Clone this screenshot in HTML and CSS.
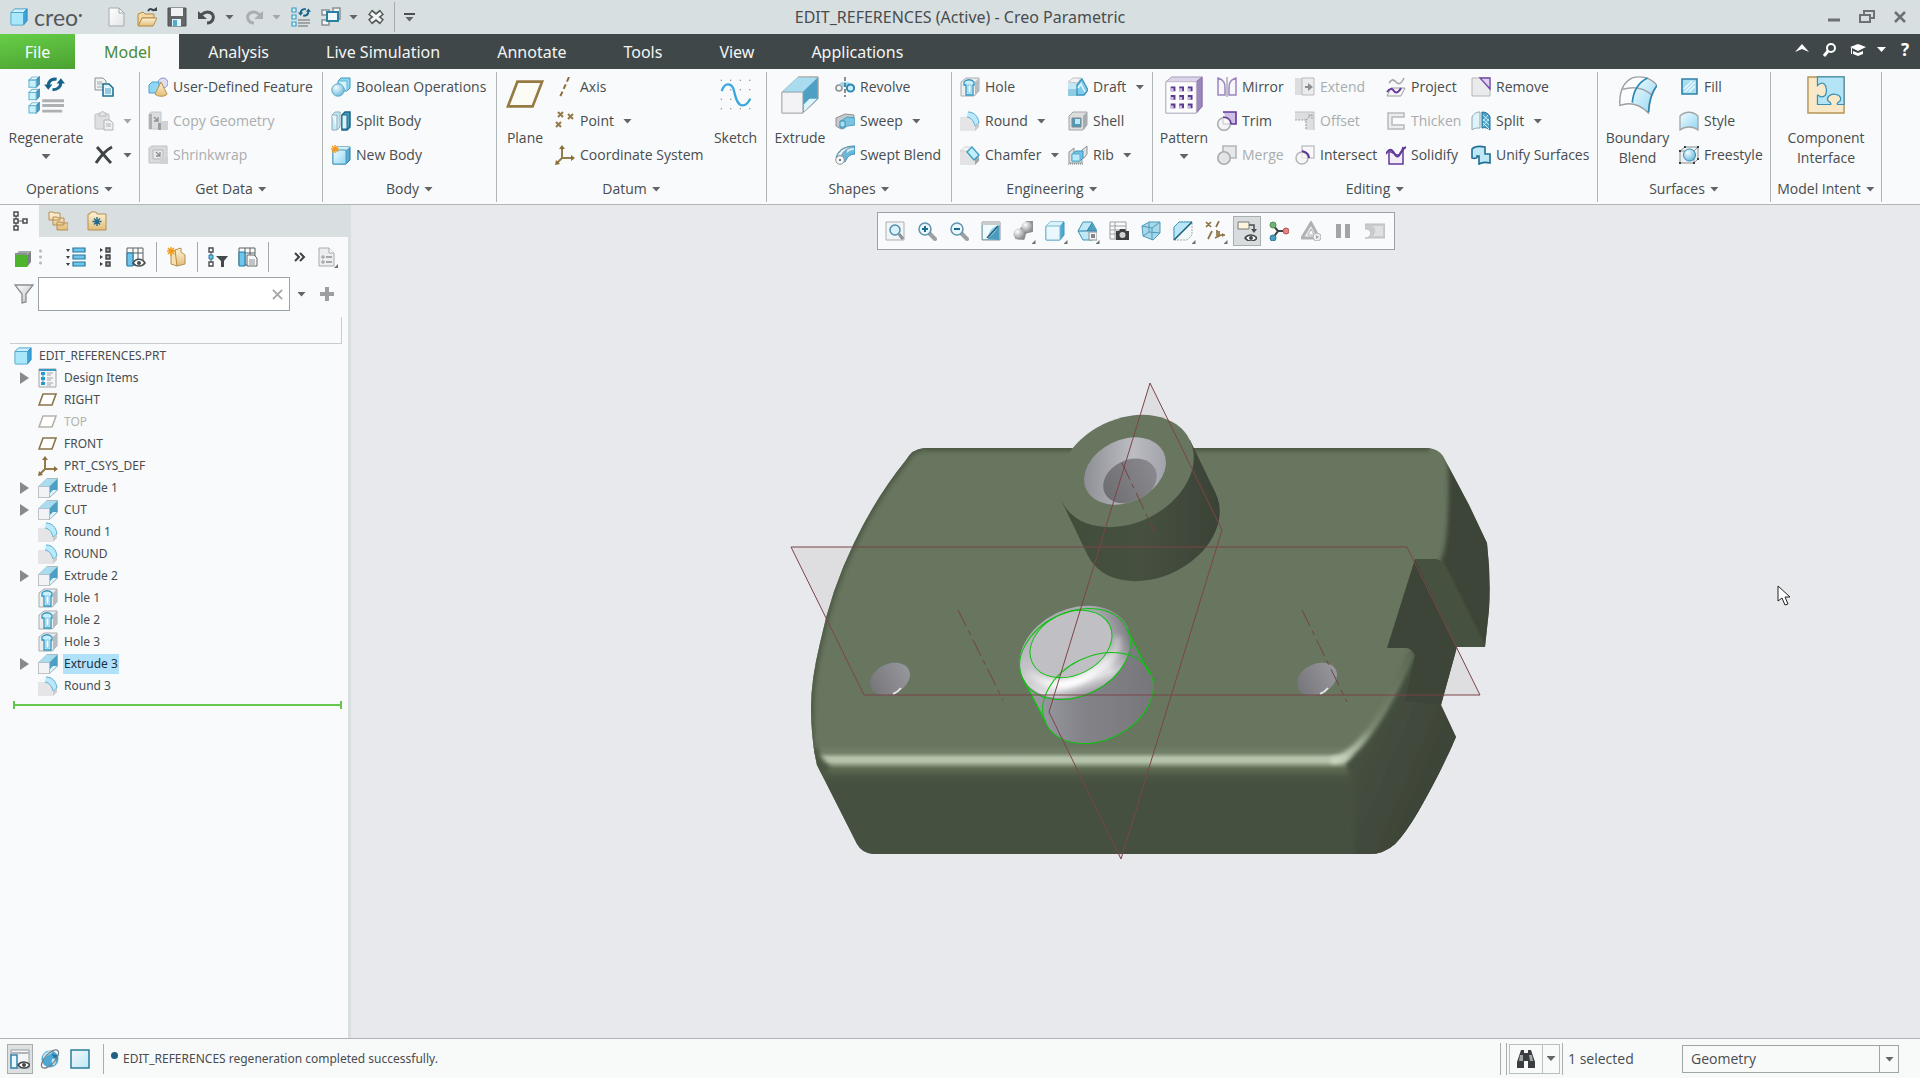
FILE: index.html
```html
<!DOCTYPE html>
<html lang="en">
<head>
<meta charset="utf-8">
<title>EDIT_REFERENCES (Active) - Creo Parametric</title>
<link rel="stylesheet" href="styles.css">
</head>
<body>
<svg class="sprite" aria-hidden="true">
  <defs>
    <linearGradient id="gBlue" x1="0" y1="0" x2="1" y2="1"><stop offset="0" stop-color="#f4fcff"/><stop offset="1" stop-color="#8fd6f3"/></linearGradient>
    <linearGradient id="gGray" x1="0" y1="0" x2="1" y2="1"><stop offset="0" stop-color="#ffffff"/><stop offset="1" stop-color="#b9bcbf"/></linearGradient>
    <linearGradient id="gPage" x1="0" y1="0" x2="1" y2="1"><stop offset="0" stop-color="#ffffff"/><stop offset="1" stop-color="#e2e4e6"/></linearGradient>
    <linearGradient id="gGold" x1="0" y1="0" x2="0" y2="1"><stop offset="0" stop-color="#fdf3d8"/><stop offset="1" stop-color="#e3bd7a"/></linearGradient>
    <radialGradient id="gBall" cx=".35" cy=".3" r=".8"><stop offset="0" stop-color="#f2fbff"/><stop offset="1" stop-color="#63b5d9"/></radialGradient>
    <radialGradient id="gGrayBall" cx=".35" cy=".3" r=".8"><stop offset="0" stop-color="#ffffff"/><stop offset="1" stop-color="#7d8083"/></radialGradient>
  </defs>
  <symbol id="cube" viewBox="0 0 20 20"><path d="M1 5 5 1h14l-4 4z" fill="#cdf1fc" stroke="#3f9cc8"/><path d="M15 5l4-4v13l-4 5z" fill="#3aa5dc" stroke="#2f86b4"/><rect x="1" y="5" width="14" height="14" rx="1" fill="#a9e7fb" stroke="#4aa5cb"/></symbol>
  <symbol id="minicube" viewBox="0 0 12 12"><path d="M1 4 4 1h7L8 4z" fill="#e6f8fd" stroke="#7fbdd6"/><path d="M8 4l3-3v7l-3 3z" fill="#4d9dc0" stroke="#3d87a8"/><path d="M1 4h7v7H1z" fill="#c9f0fb" stroke="#63b3d3"/></symbol>
  <symbol id="cycle" viewBox="0 0 20 16"><path d="M4 9c0-4 3-7 8-6" fill="none" stroke="#17648a" stroke-width="3"/><path d="M0 8h8l-4 5z" fill="#17648a"/><path d="M16 6c0 4-3 7-8 7" fill="none" stroke="#17648a" stroke-width="3"/><path d="M12 7h8l-4-5z" fill="#17648a"/></symbol>
  <symbol id="new" viewBox="0 0 20 20"><path d="M2 1h10l5 5v13H2z" fill="url(#gPage)" stroke="#a6aaad"/><path d="M12 1v5h5z" fill="#fff" stroke="#a3a7aa"/></symbol>
  <symbol id="open" viewBox="0 0 20 20"><path d="M1 7l5-2 2 2h9v4H5L2 18H1z" fill="#f3d9a3" stroke="#b58a45"/><path d="M5 11h15l-4 8H1z" fill="url(#gGold)" stroke="#b58a45"/><path d="M11 4c2-3 5-2 6 0" fill="none" stroke="#3d4548" stroke-width="2"/><path d="M14 4h6V0z" fill="#3d4548"/></symbol>
  <symbol id="save" viewBox="0 0 20 20"><path d="M1 1h18v18H1z" fill="#63676a" stroke="#4a4e50"/><path d="M4 1h12v8H4z" fill="#f0f2f3"/><path d="M5 12h9v7H5z" fill="#dff3fb"/><path d="M6 13h4v6H6z" fill="#54a9cf"/></symbol>
  <symbol id="undo" viewBox="0 0 20 20"><path d="M4 8c6-6 14-2 12 4-1 3-4 4-6 4" fill="none" stroke="currentColor" stroke-width="3"/><path d="M1 4v8h9z" fill="currentColor"/></symbol>
  <symbol id="windows" viewBox="0 0 20 20"><g fill="#f5f7f8" stroke="#8b9092" stroke-width="1.5"><path d="M1 3h7v5H1zM12 1h7v11h-7zM1 13h7v5H1z"/></g><path d="M6 5h11v9H6z" fill="#eefaff" stroke="#2b7fa5" stroke-width="2"/></symbol>
  <symbol id="closewin" viewBox="0 0 16 16"><path d="M2 3l12 10M14 3L2 13" stroke="#54595b" stroke-width="6.500"/><path d="M3 4l10 8M13 4L3 12" stroke="#f5f7f7" stroke-width="3"/></symbol>

  <symbol id="regen" viewBox="0 0 40 40"><use href="#minicube" x="1" y="0" width="13" height="13"/><use href="#minicube" x="1" y="13" width="13" height="13"/><use href="#minicube" x="1" y="27" width="13" height="13"/><use href="#cycle" x="18" y="0" width="22" height="18"/><path d="M16 26h23M16 31h23M16 37h21" stroke="#aeb1b4" stroke-width="3"/></symbol>
  <symbol id="regensm" viewBox="0 0 20 20"><g fill="#d8f3fc" stroke="#3a9cc8" stroke-width="1.200"><path d="M1 1h4v4H1zM1 8h4v4H1zM1 15h4v4H1z"/></g><use href="#cycle" x="7" y="0" width="13" height="11"/><path d="M7 13h12M7 16h12M7 19h10" stroke="#8d9194" stroke-width="1.500"/></symbol>
  <symbol id="copy" viewBox="0 0 20 20"><path d="M1 1h8l3 3v9H1z" fill="#f1f3f4" stroke="#8c9194"/><path d="M3 5h5M3 7h6M3 10h5" stroke="#a2a7aa"/><path d="M9 7h6l4 4v8H9z" fill="#e7f6fc" stroke="#1f7396" stroke-width="1.6"/><path d="M11 12h6M11 14h6M11 16h6" stroke="#4f9cbd"/></symbol>
  <symbol id="paste" viewBox="0 0 20 20"><rect x="1" y="3" width="14" height="15" rx="1" fill="#dedfe1" stroke="#bfc1c4"/><path d="M5 5V2h2c0-2 3-2 3 0h2v3z" fill="#e6e7e9" stroke="#b4b7b9"/><path d="M10 9h6l3 3v7h-9z" fill="#eff0f1" stroke="#b0b3b5"/><path d="M12 13h5M12 15h5" stroke="#b0b3b5"/></symbol>
  <symbol id="delete" viewBox="0 0 20 20"><path d="M3 2c4 4 9 11 14 16" stroke="#3f4446" stroke-width="3" fill="none"/><path d="M18 2C12 5 6 12 2 18" stroke="#3f4446" stroke-width="3" fill="none"/></symbol>
  <symbol id="udf" viewBox="0 0 20 20"><circle cx="15" cy="6" r="5" fill="#dcdff3" stroke="#8d95c2"/><path d="M1 8l3-3h7v8l-2 3H1z" fill="#8fd7f4" stroke="#4aa2c9"/><path d="M13 5l6 12c-1 3-10 3-12 0z" fill="url(#gGold)" stroke="#b98f4a"/></symbol>
  <symbol id="copygeom" viewBox="0 0 20 20"><path d="M1 3l2-2h10v8l-3 9H1z" fill="#dcdddf" stroke="#c4c6c8"/><path d="M1 3h3v15H1z" fill="#aeb0b2"/><path d="M6 6l4 4M10 6v4H6" stroke="#8c8e90" stroke-width="1.3" fill="none"/><path d="M10 12l3-2h7v9H10z" fill="#d0d2d4"/><path d="M10 12h3v7h-3z" fill="#9b9d9f"/></symbol>
  <symbol id="shrink" viewBox="0 0 20 20"><path d="M1 3l3-2h15v14l-4 3H1z" fill="#d8dadc" stroke="#c0c2c4"/><path d="M5 5h10v9H5z" fill="#e9eaeb" stroke="#b3b5b7"/><path d="M8 7l4 4M12 7v4H8" stroke="#8c8e90" stroke-width="1.3" fill="none"/><path d="M12 12h8v7h-8z" fill="#cfd1d3"/></symbol>
  <symbol id="boolean" viewBox="0 0 20 20"><path d="M7 4l3-3h9v10l-3 3H7z" fill="#8ed7f3" stroke="#3b97bf"/><path d="M7 4h9v10" fill="#d3f3fd" stroke="#65b5d5"/><circle cx="7" cy="13" r="6.2" fill="url(#gBall)" stroke="#5aa7c7"/></symbol>
  <symbol id="splitbody" viewBox="0 0 20 20"><path d="M1 4l3-3h5v15l-3 3H1z" fill="#c6e9f6" stroke="#8cabba"/><path d="M1 4h5v15" fill="#edf8fc" stroke="#8cabba"/><path d="M11 4l3-3h5v15l-3 3h-5z" fill="#4b9dc0" stroke="#1c6688" stroke-width="1.5"/><path d="M11 4h5v14h-5z" fill="#d6f4fd" stroke="#1c6688"/></symbol>
  <symbol id="newbody" viewBox="0 0 20 20"><path d="M2 5l4-3h13v13l-4 4H2z" fill="#5aabcf" stroke="#2b7ba0"/><path d="M2 5h13l4-3H6z" fill="#cfeffa"/><path d="M2 5h13v14H2z" fill="url(#gBlue)" stroke="#4a9dc0"/><path d="M4 0v8M0 4h8M1 1l6 6M7 1L1 7" stroke="#f29a1e" stroke-width="1.4"/></symbol>
  <symbol id="plane" viewBox="0 0 40 40"><path d="M12 6h26L28 32H2z" fill="#fdfbf6" stroke="#957a43" stroke-width="2.8"/></symbol>
  <symbol id="axis" viewBox="0 0 20 20"><path d="M14 0L5 20" stroke="#8b6f3c" stroke-width="2" stroke-dasharray="5 3"/></symbol>
  <symbol id="point" viewBox="0 0 20 20"><path d="M3 1l5 5M8 1L3 6M13 3l5 5M18 3l-5 5M1 11l5 5M6 11l-5 5" stroke="#94794a" stroke-width="2"/></symbol>
  <symbol id="csys" viewBox="0 0 20 20"><path d="M7 2v11h11M7 13l-5 5" stroke="#957a4a" stroke-width="2" fill="none"/><path d="M4 4l3-4 3 4zM16 10l4 3-4 3zM0 20l1-5 4 4z" fill="#8b6f3c"/></symbol>
  <symbol id="sketch" viewBox="0 0 34 34"><g fill="#4c4f51"><path d="M1 1h1v1H1zM11 1h1v1h-1zM21 1h1v1h-1zM31 1h1v1h-1zM11 11h1v1h-1zM21 11h1v1h-1zM31 11h1v1h-1zM1 21h1v1H1zM11 21h1v1h-1zM31 21h1v1h-1zM1 31h1v1H1zM11 31h1v1h-1zM21 31h1v1h-1zM31 31h1v1h-1z"/></g><path d="M2 13C5 3 13 4 15 13s4 15 9 15c4 0 6-3 8-7" fill="none" stroke="#3aa8de" stroke-width="2.4"/></symbol>
  <symbol id="extrude" viewBox="0 0 40 40"><path d="M1 17L18 1h21v23L23 39H1z" fill="#7fc1dd" stroke="#b4a9a4"/><path d="M1 17L18 1h21L23 17z" fill="#8bcbe5"/><path d="M39 1v23L23 39V17z" fill="#4d9fc3"/><path d="M18 1L2 16h21L38 2z" fill="#a9dcef"/><path d="M24 38V30l6-6h8z" fill="#dcf4fd"/><path d="M1 17h22v22H1z" fill="#f3f3f5" stroke="#a9abae"/><path d="M18 1h21v23L23 39" fill="none" stroke="#b4a9a4"/></symbol>
  <symbol id="revolve" viewBox="0 0 20 20"><circle cx="4" cy="11" r="3" fill="#f4f5f6" stroke="#8f9294" stroke-width="1.6"/><path d="M4 7c2-3 10-3 12 0v3H8" fill="#9cd8f0"/><circle cx="15.500" cy="11" r="3.600" fill="#c9effb" stroke="#2d88b3" stroke-width="2"/><path d="M10 0v20" stroke="#3f4446" stroke-width="1.2" stroke-dasharray="4 2"/></symbol>
  <symbol id="sweep" viewBox="0 0 20 20"><path d="M1 7l9-4 9 1v2l-9 4v6l-4 2-5-3z" fill="#c7cacc" stroke="#8f9294"/><path d="M6 10l6-4 8 1v7l-8 1-4 3-3-2z" fill="#7cc3df" stroke="#4ca0c4"/><path d="M5 10h5v6H5z" fill="#a9dff2" stroke="#3b8cae"/></symbol>
  <symbol id="swept" viewBox="0 0 20 20"><path d="M1 13C3 5 9 1 20 1v8c-6 0-8 4-10 8z" fill="#6bb7d8" stroke="#3a8fb5"/><path d="M2 11C6 4 10 2 17 2 10 4 8 7 6 11z" fill="#f0f4f6" stroke="#8fa1a9"/><path d="M12 5c3-2 5-2 7-2v2c-3 0-5 1-7 3z" fill="#c6ebf8"/><circle cx="5" cy="15" r="4.300" fill="#f4f5f6" stroke="#8f9294"/><circle cx="5" cy="15" r="1" fill="#4c4f51"/></symbol>
  <symbol id="hole" viewBox="0 0 20 20"><path d="M1 5l5-4h13v13l-5 5H1z" fill="#eceded" stroke="#a9acae"/><path d="M15 5l4-4v13l-4 5z" fill="#b9bcbe"/><path d="M4 8V5c2-3 8-3 10 0v3h-1v10H6V8z" fill="#c8effc" stroke="#3495c0" stroke-width="1.300"/><path d="M8 8h3v8H8z" fill="#fff" stroke="#7cc4e0"/></symbol>
  <symbol id="round" viewBox="0 0 20 20"><path d="M0 6h8c5 1 7 6 7 14H0z" fill="#e5e5e7"/><path d="M0 6l6-5h4L8 6z" fill="#f2f7f9"/><path d="M7 6c5 1 7 5 8 9l4-3C18 5 14 1 8 1" fill="#b9e9fa" stroke="#58aed0"/><path d="M15 15v5l4-4v-4z" fill="#c8cacc"/></symbol>
  <symbol id="chamfer" viewBox="0 0 20 20"><path d="M0 6h7l8 8v6H0z" fill="#e3e3e5"/><path d="M0 6l5-4h7L7 6z" fill="#f5f5f6" stroke="#cfd0d2"/><path d="M15 14l4-3v5l-4 4z" fill="#a4a7a9"/><path d="M7 7l5-5 7 8-5 5z" fill="#c2effd" stroke="#3d9cc4" stroke-width="1.300"/></symbol>
  <symbol id="draft" viewBox="0 0 20 20"><path d="M0 6h10v13H0z" fill="#c3e7f4"/><path d="M0 5l5-4h8l-3 5z" fill="#f1f2f3" stroke="#bfc1c3"/><path d="M0 12h10v7H0z" fill="#8fcbe3"/><path d="M9 8l5-6 6 11-4 5h-7z" fill="#7fcdee" stroke="#3a94ba" stroke-width="1.300"/><path d="M10 11l3-4 4 8" fill="none" stroke="#e8f8fe" stroke-width="1.500"/></symbol>
  <symbol id="shell" viewBox="0 0 20 20"><path d="M1 5l4-4h14v13l-4 5H1z" fill="#dcdddf" stroke="#a3a6a8"/><path d="M15 5l4-4v13l-4 5z" fill="#a9acae"/><path d="M4 7h9v9H4z" fill="#4c9abb" stroke="#7f8b90"/><path d="M7 8h5v5H7z" fill="#bfe7f5"/></symbol>
  <symbol id="rib" viewBox="0 0 20 20"><path d="M1 18V7l5-4v10h10l3-4V1l-5 4v13z" fill="#dfe1e2" stroke="#8f9294"/><path d="M4 9l4-3h7v7l-3 3H4z" fill="#6ec3e6" stroke="#3a94ba"/><path d="M4 9h8v7H4z" fill="#b8eafb" stroke="#58aed0"/><path d="M0 19h16" stroke="#6c7072" stroke-dasharray="1 1"/></symbol>
  <symbol id="pattern" viewBox="0 0 40 40"><path d="M1 6l6-5h32v31l-6 7H1z" fill="#dcd4ea" stroke="#a79cbf"/><path d="M33 6l6-5v31l-6 7z" fill="#9b86bd" stroke="#8671ab"/><path d="M1 6h32v33H1z" fill="#fdfdfe" stroke="#b9b3c4"/><g fill="#5b3a92"><path d="M6 11h5v5H6zM15 11h5v5h-5zM24 11h5v5h-5zM6 20h5v5H6zM15 20h5v5h-5zM24 20h5v5h-5zM6 29h5v5H6zM15 29h5v5h-5zM24 29h5v5h-5z"/></g><g fill="#cbbfe2"><path d="M6 13h3v3H6zM15 13h3v3h-3zM24 13h3v3h-3zM6 22h3v3H6zM15 22h3v3h-3zM24 22h3v3h-3zM6 31h3v3H6zM15 31h3v3h-3zM24 31h3v3h-3z"/></g></symbol>
  <symbol id="mirror" viewBox="0 0 20 20"><path d="M1 1c6 2 7 5 7 10v7H1zM19 1c-6 2-7 5-7 10v7h7z" fill="#f8f6fb" stroke="#9a85c0" stroke-width="1.500"/><path d="M10 0v20" stroke="#85898b"/></symbol>
  <symbol id="trim" viewBox="0 0 20 20"><path d="M6 1h13v12h-6" fill="#cdbfe6" stroke="#62399b" stroke-width="1.600"/><circle cx="7" cy="13" r="6.300" fill="#f2f3f4" fill-opacity=".8" stroke="#a9acae" stroke-width="1.500"/><path d="M6 13V7c4 0 7 2 7 6z" fill="#f8f8fa" stroke="#c3c5c7"/><path d="M6 6c5 0 8 3 8 7" fill="none" stroke="#62399b" stroke-width="1.600"/></symbol>
  <symbol id="merge" viewBox="0 0 20 20"><path d="M6 1h13v12H6z" fill="#e6e7e8" stroke="#b4b6b8" stroke-width="1.600"/><circle cx="7" cy="13" r="6.200" fill="#e3e4e5" stroke="#a9acae" stroke-width="1.600"/></symbol>
  <symbol id="extend" viewBox="0 0 20 20"><path d="M0 1h19v17H0z" fill="#dcdddf"/><path d="M7 1h12v17H7z" fill="#ececee" stroke="#b7b9bb"/><path d="M10 10h4" stroke="#8c8f91" stroke-width="2"/><path d="M13 6l5 4-5 4z" fill="#8c8f91"/></symbol>
  <symbol id="offset" viewBox="0 0 20 20"><path d="M0 1h19v18h-8V9H0z" fill="#dddee0"/><path d="M0 1h19v18" fill="none" stroke="#bfc1c3"/><path d="M0 9h11v10M11 9l5-5M13 4h4v4" fill="none" stroke="#a3a6a8" stroke-width="1.200" stroke-dasharray="2 1"/></symbol>
  <symbol id="intersect" viewBox="0 0 20 20"><path d="M7 1h12v12H7z" fill="#f8f8fa" stroke="#c2c4c6" stroke-width="1.500"/><circle cx="7" cy="13" r="6" fill="#f5f5f7" fill-opacity=".7" stroke="#b2b5b7" stroke-width="1.500"/><path d="M7 6c4 1 7 3 7 7" fill="none" stroke="#5e3996" stroke-width="2"/></symbol>
  <symbol id="project" viewBox="0 0 20 20"><path d="M3 6c3-4 4-4 7-1s5 2 8-4" fill="none" stroke="#a3a6a8" stroke-width="1.600"/><path d="M5 11h14l-4 8H1z" fill="#f4f4f6" stroke="#9c9fa1"/><path d="M1 15c3-4 5-4 7-1s5 1 7-3" fill="none" stroke="#62399b" stroke-width="2"/></symbol>
  <symbol id="thicken" viewBox="0 0 20 20"><path d="M18 2H2v16h16v-4H6V6h12z" fill="#ececed" stroke="#b7b9bb" stroke-width="1.500"/></symbol>
  <symbol id="solidify" viewBox="0 0 20 20"><path d="M3 7c3-2 6 4 9 3 2 0 4-4 5-8v17H3z" fill="#f2eef8" stroke="#62399b" stroke-width="1.500"/><path d="M0 9c3-6 6-5 8-1s4 5 6 1 2-5 6-7" fill="none" stroke="#62399b" stroke-width="2"/></symbol>
  <symbol id="remove" viewBox="0 0 20 20"><path d="M1 1h18v18H1z" fill="#e9eaeb" stroke="#b4b6b8"/><path d="M9 1h10v11z" fill="#ddd0f2" stroke="#6f48a6" stroke-width="1.300"/></symbol>
  <symbol id="splitsurf" viewBox="0 0 20 20"><path d="M1 6c2-4 5-5 8-5v16c-3 0-6 0-8 2z" fill="#dff3fb" stroke="#8fa7b1"/><path d="M11 1c4 0 7 2 8 5v13c-2-2-5-3-8-2z" fill="#4da3c8" stroke="#236f92"/><path d="M12 4l6 6M12 8l6 6M12 12l6 6M17 4l-5 6M18 8l-6 7" stroke="#c4ecfb" stroke-width="1"/></symbol>
  <symbol id="unify" viewBox="0 0 20 20"><path d="M1 4c3-3 8-3 13-2v7h5v9c-4-1-8-1-11 1v-8H6c1 2-2 3-5 2z" fill="#bfe8f7" stroke="#1f6f94" stroke-width="1.600"/></symbol>
  <symbol id="boundary" viewBox="0 0 40 40"><path d="M1 31C0 15 5 6 14 2h16L14 34z" fill="#fbfcfd"/><path d="M14 28c1-13 7-21 16-26l10 8c-6 8-9 18-9 29-5-5-10-8-17-11z" fill="url(#gBlue)"/><path d="M1 31C0 15 6 6 14 2c7-2 18-2 26 8-6 8-9 18-9 29C22 30 12 27 1 31z" fill="none" stroke="#9c9fa1" stroke-width="1.500"/><path d="M4 14c10-3 20-3 31 6" fill="none" stroke="#a3a6a8" stroke-width="1.800"/><path d="M14 28C15 15 20 7 30 2M31 38c1-12 4-22 9-28" fill="none" stroke="#2c88b2" stroke-width="1.800"/></symbol>
  <symbol id="fill" viewBox="0 0 20 20"><path d="M3 2h15v15H3z" fill="#a9def2" stroke="#2e83a8" stroke-width="1.600"/><path d="M5 12l8-8M6 15L16 5M10 15l6-6" stroke="#f0fbff" stroke-width="1.300"/></symbol>
  <symbol id="style" viewBox="0 0 20 20"><path d="M1 5c5-5 13-5 18 0v14c-5-4-13-4-18 0z" fill="url(#gBlue)" stroke="#a2a5a8" stroke-width="1.300"/></symbol>
  <symbol id="freestyle" viewBox="0 0 20 20"><path d="M1 6l5-4h13v12l-4 4H1zM1 6h14v12M15 6l4-4" fill="#eef0f1" stroke="#8c8f91"/><circle cx="10.500" cy="10" r="6" fill="url(#gBall)" stroke="#2f8dba"/><path d="M0 5h2v2H0zM5 1h2v2H5zM18 1h2v2h-2zM0 17h2v2H0zM14 17h2v2h-2zM18 13h2v2h-2z" fill="#3a3d3f"/></symbol>
  <symbol id="component" viewBox="0 0 40 40"><path d="M1 1h38v38H1z" fill="#fae9c8" stroke="#b39455" stroke-width="1.500"/><path d="M11 1h28v29h-7c-1-2 2-3 3-4 2-5-4-7-7-7s-8 3-6 7c1 1 4 2 3 4H11V20c2 0 2 2 4 2 6 0 6-7 5-10-1-5-5-6-9-2z" fill="#b4e4f6" stroke="#3b8fb3" stroke-width="1.300"/></symbol>

  <symbol id="tree" viewBox="0 0 20 20"><path d="M4 3v14M4 10h10" stroke="#55595b" stroke-width="1.200"/><g fill="#f7f9f9" stroke="#4a4e50" stroke-width="1.500"><path d="M2 1h4v4H2zM2 8h4v4H2zM2 15h4v4H2zM11 8h4v4h-4z"/></g></symbol>
  <symbol id="folders" viewBox="0 0 20 20"><g fill="url(#gGold)" stroke="#b58f50"><path d="M1 1h4l1 1h6v7H1zM5 6h4l1 1h6v7H5zM9 11h4l1 1h6v7H9z"/></g></symbol>
  <symbol id="favorites" viewBox="0 0 20 20"><path d="M1 3h2l1-2h5l1 2h9v16H1z" fill="url(#gGold)" stroke="#b58f50"/><path d="M10 6v9M5.500 10.500h9M7 7.500l6 6M13 7.500l-6 6" stroke="#1f6b8e" stroke-width="1.400"/></symbol>
  <symbol id="greenbox" viewBox="0 0 20 20"><path d="M2 8l4-4h12l-4 4z" fill="#a4a7a9"/><path d="M14 8l4-4v11l-4 5z" fill="#7e8183"/><path d="M2 8h12v12H2z" fill="#4cb52e"/><path d="M2 7h12" stroke="#8c8f91" stroke-width="2"/></symbol>
  <symbol id="expand" viewBox="0 0 20 20"><path d="M0 2h4l-2 3zM0 9h4l-2 3zM0 16h4l-2 3z" fill="#3a3e40"/><path d="M7 1h12v4H7zM7 8h12v4H7zM7 15h12v4H7z" fill="#6fc6ec" stroke="#25769b" stroke-width="1.200"/></symbol>
  <symbol id="collapse" viewBox="0 0 20 20"><path d="M4 1l3 2-3 2zM4 8l3 2-3 2zM4 15l3 2-3 2z" fill="#3a3e40"/><path d="M10 1h4v4h-4zM10 8h4v4h-4zM10 15h4v4h-4z" fill="#9a9da0" stroke="#3d4143" stroke-width="1.400"/></symbol>
  <symbol id="columns" viewBox="0 0 20 20"><path d="M1 1h16v17H1zM7 1v17M12 1v14M1 6h16" fill="#fafbfb" stroke="#5c6062"/><path d="M1 6h6v13H1z" fill="#6fc6ec" stroke="#25769b"/><path d="M7 16c3-5 9-5 12 0-3 4-9 4-12 0z" fill="#fff" stroke="#4a4e50" stroke-width="1.600"/><circle cx="13" cy="16" r="2" fill="#4a4e50"/></symbol>
  <symbol id="folderstar" viewBox="0 0 20 20"><path d="M4 4l6-1v16l-6-2z" fill="#f6dfae" stroke="#b58f50"/><path d="M8 3l6-2v4l4 3v9l-8 2z" fill="url(#gGold)" stroke="#b58f50"/><path d="M4 0v9M0 4h9M1 1l6 6M7 1L1 7" stroke="#f29a1e" stroke-width="1.500"/></symbol>
  <symbol id="treefilter" viewBox="0 0 20 20"><path d="M3 3v14" stroke="#4a4e50"/><g fill="#fff" stroke="#4a4e50" stroke-width="1.400"><path d="M1 1h4v4H1zM1 15h4v4H1z"/></g><path d="M1 8h4v4H1z" fill="#6fc6ec" stroke="#25769b"/><path d="M8 9h12l-4 5v6h-3v-6z" fill="#44494b"/></symbol>
  <symbol id="columnsdoc" viewBox="0 0 20 20"><path d="M1 1h16v17H1zM7 1v17M12 1v17M1 6h16" fill="#fafbfb" stroke="#5c6062"/><path d="M1 5h6v14H1z" fill="#6fc6ec" stroke="#25769b"/><path d="M9 8h7l3 3v8H9z" fill="#f6f7f7" stroke="#63676a"/><path d="M11 13h6M11 15h6M11 17h6" stroke="#8b8f91"/></symbol>
  <symbol id="doc" viewBox="0 0 20 20"><path d="M2 1h10l5 5v13H2z" fill="#eceeef" stroke="#a9acae"/><path d="M12 1v5h5" fill="#fff" stroke="#a9acae"/><circle cx="6" cy="10" r="1.200" fill="none" stroke="#8d9092"/><circle cx="6" cy="15" r="1.200" fill="none" stroke="#8d9092"/><path d="M9 10h6M9 15h6" stroke="#8d9092" stroke-width="1.500"/></symbol>
  <symbol id="funnel" viewBox="0 0 20 20"><path d="M1 1h18l-7 9v8l-4 1v-9z" fill="url(#gGray)" stroke="#8a8e90" stroke-width="1.300"/></symbol>
  <symbol id="items" viewBox="0 0 20 20"><path d="M1 1h17v18H1z" fill="#f4f6f7" stroke="#9fa4a7"/><path d="M1 2h17" stroke="#3a9bcb" stroke-width="2"/><path d="M5 6v11" stroke="#2b8dbf"/><path d="M3 4h4v3H3zM3 9h4v3H3zM3 14h4v3H3z" fill="#2b9ad4"/><path d="M9 5h6M9 7h4M9 10h6M9 12h4M9 15h6M9 17h4" stroke="#a3a7aa"/></symbol>
  <symbol id="planesm" viewBox="0 0 20 20"><path d="M5 4h13l-4 11H1z" fill="#fff" stroke="currentColor" stroke-width="1.600"/></symbol>

  <symbol id="lens" viewBox="0 0 20 20"><path d="M12 12l6 6" stroke="#9da1a4" stroke-width="4" stroke-linecap="round"/><circle cx="8" cy="8" r="6" fill="#eaf7fd" stroke="#5f95b0" stroke-width="1.500"/></symbol>
  <symbol id="refit" viewBox="0 0 20 20"><path d="M1 1h18v18H1z" fill="#f2f4f5" stroke="#aeb2b5"/><circle cx="10" cy="9" r="5" fill="#d9f1fb" stroke="#4e8fae" stroke-width="1.500"/><path d="M14 13l4 5" stroke="#8b8f92" stroke-width="3"/></symbol>
  <symbol id="zoomin" viewBox="0 0 20 20"><use href="#lens"/><path d="M5 8h6M8 5v6" stroke="#1b6c94" stroke-width="2"/></symbol>
  <symbol id="zoomout" viewBox="0 0 20 20"><use href="#lens"/><path d="M5 8h6" stroke="#1b6c94" stroke-width="2"/></symbol>
  <symbol id="repaint" viewBox="0 0 20 20"><path d="M1 1h18v18H1z" fill="#8ed0ea" stroke="#8f9497"/><path d="M1 1h18v3H1z" fill="#c8cbcd"/><path d="M18 5c-5 8-8 10-12 13l12 1z" fill="#4c9cc0"/><path d="M18 4C10 6 7 12 7 18L2 18V4z" fill="#f3fafd"/><path d="M17 5L6 17" stroke="#2c5f77" stroke-width="1.600"/></symbol>
  <symbol id="spheres" viewBox="0 0 20 20"><path d="M8 6c3 1 3-3 5-6h7v11l-5 1c-4 1-1 3-4 7l-9-1z" fill="#8d9092"/><circle cx="14" cy="6" r="5.500" fill="url(#gGrayBall)"/><circle cx="6" cy="13" r="5.500" fill="url(#gGrayBall)"/></symbol>
  <symbol id="display" viewBox="0 0 20 20"><path d="M1 5l4-4h14v13l-4 5H1z" fill="#4fabd2" stroke="#3b93b9"/><path d="M1 5l4-4h13l-3 4z" fill="#d9f3fb"/><path d="M1 5h14v14H1z" fill="#eaf8fd" stroke="#7bb9d2"/></symbol>
  <symbol id="saved" viewBox="0 0 20 20"><path d="M1 10L6 1h9l5 9-5 9H6z" fill="#bfe7f6" stroke="#3d93b7"/><path d="M10 10l5-8 5 8z" fill="#4f9fc1"/><path d="M1 10h9l5-8M10 10h9" fill="none" stroke="#2e7fa3"/><path d="M12 11h8v8h-8z" fill="#f5f6f6" stroke="#8a8e90"/><path d="M14 13h4v4h-4z" fill="#83878a"/></symbol>
  <symbol id="viewmgr" viewBox="0 0 20 20"><path d="M1 1h16v17H1zM1 5h16M1 9h16M1 13h8M6 1v17" fill="#fafafa" stroke="#9da1a3"/><path d="M7 10h3l1-2h5l1 2h3v9H7z" fill="#3d4042"/><circle cx="13.500" cy="14" r="3" fill="#cfd2d4"/></symbol>
  <symbol id="persp" viewBox="0 0 20 20"><path d="M1 5l7-4h11v11l-7 7-10-4z" fill="#a9d8ea" stroke="#4c9abb"/><path d="M1 5l10 2 8-6M11 7v12M8 1v10l-6 4M8 11l11 1" fill="none" stroke="#4c9abb"/></symbol>
  <symbol id="section" viewBox="0 0 20 20"><path d="M1 6l5-5h13v13l-5 5H1z" fill="#f3f8fa" stroke="#a5a9ab" stroke-dasharray="2 1"/><path d="M1 19V6l5-5h13z" fill="#b9e5f5" stroke="#3f9ac2"/><path d="M1 19L19 1" stroke="#195f80" stroke-width="1.600"/></symbol>
  <symbol id="datums" viewBox="0 0 20 20"><path d="M1 1l5 5M6 1L1 6M14 0l-3 6M7 10L3 18M12 9v6M10 17l6-3h4M14 10v6" stroke="#8d7243" stroke-width="1.700" fill="none"/><path d="M17 12l3 2-3 2z" fill="#8d7243"/></symbol>
  <symbol id="annot" viewBox="0 0 20 20"><path d="M1 1h11v7H1z" fill="#fdf6db" stroke="#77797b"/><path d="M12 4h5v6" fill="none" stroke="#4a4e50" stroke-width="1.500"/><path d="M14 8h6l-3 4z" fill="#4a4e50"/><path d="M8 17c3-4 9-4 12 0-3 4-9 4-12 0z" fill="#fff" stroke="#44484a" stroke-width="1.600"/><circle cx="14" cy="17" r="2" fill="#44484a"/></symbol>
  <symbol id="spin" viewBox="0 0 20 20"><path d="M4 4l5 6-5 7M9 10h8" fill="none" stroke="#3c4042" stroke-width="2"/><circle cx="4" cy="4" r="3" fill="#74b476" stroke="#4d8a50"/><circle cx="17" cy="10" r="3" fill="#e08383" stroke="#b65252"/><circle cx="4" cy="17" r="3" fill="#4e9dc2" stroke="#2d7698"/></symbol>
  <symbol id="simulate" viewBox="0 0 20 20"><path d="M10 2l8 15H1z" fill="#ececed" stroke="#b0b2b4" stroke-width="3"/><path d="M10 8l3 6H7z" fill="#fff" stroke="#b0b2b4"/><circle cx="16" cy="16" r="4" fill="#eee" stroke="#b5b7b9"/><path d="M15 14l3 2-3 2z" fill="#a4a6a8"/></symbol>
  <symbol id="pause" viewBox="0 0 20 20"><path d="M3 3h5v14H3zM12 3h5v14h-5z" fill="#a2a4a6"/></symbol>
  <symbol id="result" viewBox="0 0 20 20"><path d="M0 3h20v14H0c7 0 8-9 0-9z" fill="#c9cbcd" stroke="#bdbfc1"/><path d="M8 5h10v10H8c3-3 3-7 0-10z" fill="#dfe0e1"/></symbol>

  <symbol id="panel" viewBox="0 0 20 20"><path d="M1 1h18v18H1z" fill="#f2f4f5" stroke="#9a9ea1"/><path d="M1 4h18" stroke="#b2b5b8" stroke-width="2"/><path d="M1 6h6v13H1z" fill="#e6f7fd" stroke="#3287ad" stroke-width="1.500"/><path d="M8 16c3-4 9-4 12 0-3 4-9 4-12 0z" fill="#fff" stroke="#44484a" stroke-width="1.500"/><circle cx="14" cy="16" r="2" fill="#44484a"/></symbol>
  <symbol id="globe" viewBox="0 0 20 20"><circle cx="10" cy="10" r="8.500" fill="#4ba8d4"/><path d="M3 7c2-4 7-6 9-5s-3 4-5 5-3 5-4 4zM12 10c4-1 5 2 3 5s-4 0-3-5z" fill="#c6e9f7"/><path d="M12 5l5 1 1 4-5-2z" fill="#2178a4"/><ellipse cx="10" cy="10" rx="11.500" ry="5" fill="none" stroke="#7a7f82" stroke-width="1.300" transform="rotate(-48 10 10)"/></symbol>
  <symbol id="screen" viewBox="0 0 20 20"><path d="M1 1h18v18H1z" fill="url(#gBlue)"/><path d="M1 1h18v18H1z" fill="#f1f5f7" fill-opacity=".5" stroke="#2b7d9f" stroke-width="1.500"/></symbol>
  <symbol id="binoc" viewBox="0 0 20 20"><path d="M5 1h3v3h4V1h3l4 12v6h-7v-7H8v7H1v-6z" fill="#3b3e40"/><path d="M4 6h3v6H3zM13 6h3l1 6h-3z" fill="#a2a5a7"/></symbol>
</svg>

<header class="titlebar">
  <div class="brand"><svg class="i18"><use href="#cube"/></svg><span>creo<sup>•</sup></span></div>
  <div class="quick">
    <button aria-label="New"><svg class="i20"><use href="#new"/></svg></button>
    <button aria-label="Open"><svg class="i20"><use href="#open"/></svg></button>
    <button aria-label="Save"><svg class="i20"><use href="#save"/></svg></button>
    <button aria-label="Undo"><svg class="i20"><use href="#undo"/></svg><i class="caret"></i></button>
    <button aria-label="Redo" disabled><svg class="i20 flip"><use href="#undo"/></svg><i class="caret"></i></button>
    <button aria-label="Regenerate"><svg class="i20"><use href="#regensm"/></svg></button>
    <button aria-label="Windows"><svg class="i20"><use href="#windows"/></svg><i class="caret"></i></button>
    <button aria-label="Close"><svg class="i16"><use href="#closewin"/></svg></button>
    <button class="customize" aria-label="Customize"><i class="bar"></i><i class="caret"></i></button>
  </div>
  <h1>EDIT_REFERENCES (Active) - Creo Parametric</h1>
  <div class="winctl">
    <button aria-label="Minimize"><svg class="i16" viewBox="0 0 16 16"><path d="M2 11h12" stroke="#6d7173" stroke-width="3"/></svg></button>
    <button aria-label="Restore"><svg class="i16" viewBox="0 0 16 16"><path d="M5 6V2h10v7h-4M1 6h10v7H1z" fill="none" stroke="#6d7173" stroke-width="2"/></svg></button>
    <button aria-label="Close window"><svg class="i16" viewBox="0 0 16 16"><path d="M3 3l10 10M13 3L3 13" stroke="#6d7173" stroke-width="2.500"/></svg></button>
  </div>
</header>

<nav class="tabs">
  <button class="file">File</button>
  <button class="on">Model</button>
  <button>Analysis</button>
  <button>Live Simulation</button>
  <button>Annotate</button>
  <button>Tools</button>
  <button>View</button>
  <button>Applications</button>
  <div class="help">
    <button aria-label="Collapse ribbon"><svg class="i16" viewBox="0 0 16 16"><path d="M1 10l7-8 7 8-7-3z" fill="#fff"/></svg></button>
    <button aria-label="Search"><svg class="i16" viewBox="0 0 16 16"><circle cx="9" cy="6" r="4" fill="none" stroke="#fff" stroke-width="2"/><path d="M6 9l-4 5" stroke="#fff" stroke-width="3"/></svg></button>
    <button aria-label="Learning"><svg class="i16" viewBox="0 0 16 16"><path d="M0 5l8-3 8 3-8 4zM3 9l5 2 5-2v3l-5 2-5-2zM1 6h1v6H1z" fill="#fff"/></svg><i class="caret"></i></button>
    <button aria-label="Help"><b>?</b></button>
  </div>
</nav>

<section class="ribbon">
  <div class="group ops">
    <div class="cols">
      <button class="big"><svg class="i40"><use href="#regen"/></svg><span>Regenerate</span><i class="caret"></i></button>
      <div class="col">
        <button aria-label="Copy"><svg class="i20"><use href="#copy"/></svg></button>
        <button aria-label="Paste" disabled><svg class="i20"><use href="#paste"/></svg><i class="caret"></i></button>
        <button aria-label="Delete"><svg class="i20"><use href="#delete"/></svg><i class="caret"></i></button>
      </div>
    </div>
    <button class="name">Operations<i class="caret"></i></button>
  </div>
  <div class="group getdata">
    <div class="cols"><div class="col">
      <button><svg class="i20"><use href="#udf"/></svg>User-Defined Feature</button>
      <button disabled><svg class="i20"><use href="#copygeom"/></svg>Copy Geometry</button>
      <button disabled><svg class="i20"><use href="#shrink"/></svg>Shrinkwrap</button>
    </div></div>
    <button class="name">Get Data<i class="caret"></i></button>
  </div>
  <div class="group body">
    <div class="cols"><div class="col">
      <button><svg class="i20"><use href="#boolean"/></svg>Boolean Operations</button>
      <button><svg class="i20"><use href="#splitbody"/></svg>Split Body</button>
      <button><svg class="i20"><use href="#newbody"/></svg>New Body</button>
    </div></div>
    <button class="name">Body<i class="caret"></i></button>
  </div>
  <div class="group datum">
    <div class="cols">
      <button class="big"><svg class="i40"><use href="#plane"/></svg><span>Plane</span></button>
      <div class="col">
        <button><svg class="i20"><use href="#axis"/></svg>Axis</button>
        <button><svg class="i20"><use href="#point"/></svg>Point<i class="caret"></i></button>
        <button><svg class="i20"><use href="#csys"/></svg>Coordinate System</button>
      </div>
      <button class="big"><svg class="i40" viewBox="-3 -3 40 40"><use href="#sketch" width="34" height="34"/></svg><span>Sketch</span></button>
    </div>
    <button class="name">Datum<i class="caret"></i></button>
  </div>
  <div class="group shapes">
    <div class="cols">
      <button class="big"><svg class="i40"><use href="#extrude"/></svg><span>Extrude</span></button>
      <div class="col">
        <button><svg class="i20"><use href="#revolve"/></svg>Revolve</button>
        <button><svg class="i20"><use href="#sweep"/></svg>Sweep<i class="caret"></i></button>
        <button><svg class="i20"><use href="#swept"/></svg>Swept Blend</button>
      </div>
    </div>
    <button class="name">Shapes<i class="caret"></i></button>
  </div>
  <div class="group eng">
    <div class="cols">
      <div class="col">
        <button><svg class="i20"><use href="#hole"/></svg>Hole</button>
        <button><svg class="i20"><use href="#round"/></svg>Round<i class="caret"></i></button>
        <button><svg class="i20"><use href="#chamfer"/></svg>Chamfer<i class="caret"></i></button>
      </div>
      <div class="col">
        <button><svg class="i20"><use href="#draft"/></svg>Draft<i class="caret"></i></button>
        <button><svg class="i20"><use href="#shell"/></svg>Shell</button>
        <button><svg class="i20"><use href="#rib"/></svg>Rib<i class="caret"></i></button>
      </div>
    </div>
    <button class="name">Engineering<i class="caret"></i></button>
  </div>
  <div class="group editing">
    <div class="cols">
      <button class="big"><svg class="i40"><use href="#pattern"/></svg><span>Pattern</span><i class="caret"></i></button>
      <div class="col">
        <button><svg class="i20"><use href="#mirror"/></svg>Mirror</button>
        <button><svg class="i20"><use href="#trim"/></svg>Trim</button>
        <button disabled><svg class="i20"><use href="#merge"/></svg>Merge</button>
      </div>
      <div class="col">
        <button disabled><svg class="i20"><use href="#extend"/></svg>Extend</button>
        <button disabled><svg class="i20"><use href="#offset"/></svg>Offset</button>
        <button><svg class="i20"><use href="#intersect"/></svg>Intersect</button>
      </div>
      <div class="col">
        <button><svg class="i20"><use href="#project"/></svg>Project</button>
        <button disabled><svg class="i20"><use href="#thicken"/></svg>Thicken</button>
        <button><svg class="i20"><use href="#solidify"/></svg>Solidify</button>
      </div>
      <div class="col">
        <button><svg class="i20"><use href="#remove"/></svg>Remove</button>
        <button><svg class="i20"><use href="#splitsurf"/></svg>Split<i class="caret"></i></button>
        <button><svg class="i20"><use href="#unify"/></svg>Unify Surfaces</button>
      </div>
    </div>
    <button class="name">Editing<i class="caret"></i></button>
  </div>
  <div class="group surfaces">
    <div class="cols">
      <button class="big"><svg class="i40"><use href="#boundary"/></svg><span>Boundary<br>Blend</span></button>
      <div class="col">
        <button><svg class="i20"><use href="#fill"/></svg>Fill</button>
        <button><svg class="i20"><use href="#style"/></svg>Style</button>
        <button><svg class="i20"><use href="#freestyle"/></svg>Freestyle</button>
      </div>
    </div>
    <button class="name">Surfaces<i class="caret"></i></button>
  </div>
  <div class="group intent">
    <div class="cols"><button class="big"><svg class="i40"><use href="#component"/></svg><span>Component<br>Interface</span></button></div>
    <button class="name">Model Intent<i class="caret"></i></button>
  </div>
</section>

<main>
  <aside>
    <div class="paneltabs">
      <button class="on" aria-label="Model tree"><svg class="i20"><use href="#tree"/></svg></button>
      <button aria-label="Folders"><svg class="i20"><use href="#folders"/></svg></button>
      <button aria-label="Favorites"><svg class="i20"><use href="#favorites"/></svg></button>
    </div>
    <div class="treetools">
      <button aria-label="Model"><svg class="i20"><use href="#greenbox"/></svg></button>
      <i class="grip"></i>
      <button aria-label="Expand all"><svg class="i20"><use href="#expand"/></svg></button>
      <button aria-label="Collapse all"><svg class="i20"><use href="#collapse"/></svg></button>
      <button aria-label="Columns"><svg class="i20"><use href="#columns"/></svg></button>
      <i class="sep"></i>
      <button aria-label="New folder"><svg class="i20"><use href="#folderstar"/></svg></button>
      <i class="sep"></i>
      <button aria-label="Tree filters"><svg class="i20"><use href="#treefilter"/></svg></button>
      <button aria-label="Tree columns"><svg class="i20"><use href="#columnsdoc"/></svg></button>
      <i class="sep"></i>
      <button class="more" aria-label="More"><svg viewBox="0 0 12 10"><path d="M1 1l4 4-4 4M6 1l4 4-4 4" fill="none" stroke="#3d4143" stroke-width="2"/></svg></button>
      <button class="corner" aria-label="Settings"><svg class="i20"><use href="#doc"/></svg></button>
    </div>
    <div class="filter">
      <svg class="i20"><use href="#funnel"/></svg>
      <div class="searchbox"><input type="text" aria-label="Filter tree"><button aria-label="Clear"><svg viewBox="0 0 12 12"><path d="M1 1l10 10M11 1L1 11" stroke="#a3a7a9" stroke-width="2"/></svg></button></div>
      <i class="caret"></i>
      <button aria-label="Add filter"><svg class="plus" viewBox="0 0 14 14"><path d="M7 0v14M0 7h14" stroke="#9b9fa1" stroke-width="4"/></svg></button>
    </div>
    <div class="treehead"></div>
    <ul class="tree">
      <li class="root"><svg class="i18"><use href="#cube"/></svg><span>EDIT_REFERENCES.PRT</span></li>
      <li><button class="exp" aria-label="Expand"></button><svg class="i20"><use href="#items"/></svg><span>Design Items</span></li>
      <li class="pl"><svg class="i20"><use href="#planesm"/></svg><span>RIGHT</span></li>
      <li class="pl hid"><svg class="i20"><use href="#planesm"/></svg><span>TOP</span></li>
      <li class="pl"><svg class="i20"><use href="#planesm"/></svg><span>FRONT</span></li>
      <li><svg class="i20"><use href="#csys"/></svg><span>PRT_CSYS_DEF</span></li>
      <li><button class="exp" aria-label="Expand"></button><svg class="i20"><use href="#extrude"/></svg><span>Extrude 1</span></li>
      <li><button class="exp" aria-label="Expand"></button><svg class="i20"><use href="#extrude"/></svg><span>CUT</span></li>
      <li><svg class="i20"><use href="#round"/></svg><span>Round 1</span></li>
      <li><svg class="i20"><use href="#round"/></svg><span>ROUND</span></li>
      <li><button class="exp" aria-label="Expand"></button><svg class="i20"><use href="#extrude"/></svg><span>Extrude 2</span></li>
      <li><svg class="i20"><use href="#hole"/></svg><span>Hole 1</span></li>
      <li><svg class="i20"><use href="#hole"/></svg><span>Hole 2</span></li>
      <li><svg class="i20"><use href="#hole"/></svg><span>Hole 3</span></li>
      <li class="sel"><button class="exp" aria-label="Expand"></button><svg class="i20"><use href="#extrude"/></svg><span>Extrude 3</span></li>
      <li><svg class="i20"><use href="#round"/></svg><span>Round 3</span></li>
    </ul>
    <div class="insert"></div>
  </aside>

  <section class="viewport">
    <svg class="scene" viewBox="351 205 1569 833" role="img" aria-label="Part model">
      <defs>
        <linearGradient id="front" x1="0" y1="745" x2="0" y2="785" gradientUnits="userSpaceOnUse"><stop offset="0" stop-color="#68755f"/><stop offset=".2" stop-color="#73816a"/><stop offset=".32" stop-color="#b5c3ab"/><stop offset=".42" stop-color="#b3c2a8"/><stop offset=".58" stop-color="#5f6c54"/><stop offset=".8" stop-color="#495542"/><stop offset="1" stop-color="#455040"/></linearGradient>
        <linearGradient id="side" x1="1345" y1="770" x2="1415" y2="800" gradientUnits="userSpaceOnUse"><stop offset="0" stop-color="#455040"/><stop offset="1" stop-color="#3e4538"/></linearGradient>
        <linearGradient id="bossSide" x1="1065" y1="0" x2="1218" y2="0" gradientUnits="userSpaceOnUse"><stop offset="0" stop-color="#414d3a"/><stop offset=".5" stop-color="#465040"/><stop offset="1" stop-color="#3b4337"/></linearGradient>
        <linearGradient id="bore" x1="1085" y1="0" x2="1165" y2="0" gradientUnits="userSpaceOnUse"><stop offset="0" stop-color="#8f8f96"/><stop offset=".6" stop-color="#bcbcc3"/><stop offset="1" stop-color="#a2a3ab"/></linearGradient>
        <linearGradient id="deep" x1="1103" y1="0" x2="1157" y2="0" gradientUnits="userSpaceOnUse"><stop offset="0" stop-color="#6f6f73"/><stop offset="1" stop-color="#88888e"/></linearGradient>
        <linearGradient id="pinSide" x1="1035" y1="0" x2="1152" y2="0" gradientUnits="userSpaceOnUse"><stop offset="0" stop-color="#9a9aa2"/><stop offset=".4" stop-color="#838389"/><stop offset="1" stop-color="#77777b"/></linearGradient>
        <linearGradient id="pinRound" x1="1045" y1="610" x2="1075" y2="699" gradientUnits="userSpaceOnUse"><stop offset="0" stop-color="#a6a6ad"/><stop offset=".55" stop-color="#c4c4c9"/><stop offset=".85" stop-color="#dedee1"/><stop offset="1" stop-color="#98989d"/></linearGradient>
        <linearGradient id="pinShade" x1="1104" y1="655" x2="1132" y2="645" gradientUnits="userSpaceOnUse"><stop offset="0" stop-color="#8a8a90" stop-opacity="0"/><stop offset="1" stop-color="#808086"/></linearGradient>
        <linearGradient id="glint" x1="1030" y1="0" x2="1120" y2="0" gradientUnits="userSpaceOnUse"><stop offset="0" stop-color="#fff" stop-opacity=".2"/><stop offset=".35" stop-color="#fff"/><stop offset=".6" stop-color="#fff" stop-opacity=".9"/><stop offset="1" stop-color="#fff" stop-opacity=".25"/></linearGradient>
        <linearGradient id="holeL" x1="0" x2="1"><stop offset="0" stop-color="#77777b"/><stop offset="1" stop-color="#96969d"/></linearGradient>
        <linearGradient id="edge" x1="0" y1="650" x2="0" y2="762" gradientUnits="userSpaceOnUse"><stop offset="0" stop-color="#5d6a53"/><stop offset=".7" stop-color="#7b8a70"/><stop offset="1" stop-color="#cfdcc5"/></linearGradient>
        <filter id="soft" filterUnits="userSpaceOnUse" x="780" y="400" width="750" height="500"><feGaussianBlur stdDeviation="2"/></filter>
        <clipPath id="bodyClip"><path d="M924 448H1429Q1438 449 1443 456L1469 505 1487 543Q1491 577 1489 610L1485 647H1457L1441 705 1456 737Q1442 770 1418 812 1405 834 1395 844 1384 854 1369 854H873Q862 853 857 844L817 765Q811 740 811 707 811 680 820 643 831 590 854 543 876 497 906 460 912 449 924 448Z"/></clipPath>
        <clipPath id="bossClip"><path d="M1062 502L1190 440 1216 494 1088 556z"/><ellipse cx="1152" cy="525" rx="71" ry="52" transform="rotate(-26 1152 525)"/></clipPath>
        <clipPath id="boreClip"><ellipse cx="1125" cy="471" rx="43" ry="31" transform="rotate(-26 1125 471)"/></clipPath>
        <clipPath id="pinClip"><path d="M1023 679L1127 629 1149 673 1046 723z"/><ellipse cx="1098" cy="698" rx="58" ry="42" transform="rotate(-26 1098 698)"/></clipPath>
        <clipPath id="capClip"><ellipse cx="1075" cy="652" rx="58" ry="43" transform="rotate(-26 1075 652)"/></clipPath>
      </defs>
      <path d="M791 547H1407L1480 695H864zM1150 383L1222 530 1121 859 1049 712z" fill="#a8a09a" fill-opacity=".15"/>
      <g clip-path="url(#bodyClip)">
        <path d="M800 440h700v420H800z" fill="#68755f"/>
        <path d="M924 448H1429" stroke="#4a5741" stroke-width="6" filter="url(#soft)"/>
        <path d="M924 448Q912 449 906 460 876 497 854 543 831 590 820 643 811 680 811 707V740L817 765" fill="none" stroke="#4d5a44" stroke-width="6" filter="url(#soft)"/>
        <path d="M800 745H1500V870H800z" fill="url(#front)"/>
        <path d="M806 748l11-2q4 14 13 20l-4 10-18-4z" fill="#4b5743" filter="url(#soft)"/>
        <path d="M1412 650h60v230H1352Q1362 800 1345 764 1362 746 1382 712 1400 680 1412 650z" fill="url(#side)" filter="url(#soft)"/>
        <path d="M1411 655Q1384 718 1357 746 1345 758 1334 760" fill="none" stroke="url(#edge)" stroke-width="7" stroke-linecap="round" filter="url(#soft)"/>
        <path d="M1444 440q6 20 4 70-1 40-8 51l4 8 41 82h14V440z" fill="#3d4538" filter="url(#soft)"/>
        <path d="M1415 559h21q6 1 10 8l39 80h-28z" fill="#475140"/>
        <path d="M1415 559l42 88-16 58-36-4 10-46q-4-7-9-7h-19z" fill="#3d4538"/>
      </g>
      <path d="M1050 410h180v180h-180z" fill="url(#bossSide)" clip-path="url(#bossClip)"/>
      <ellipse cx="1126" cy="471" rx="71" ry="52" transform="rotate(-26 1126 471)" fill="#68755f"/>
      <g clip-path="url(#boreClip)"><path d="M1075 430h100v80h-100z" fill="url(#bore)"/><ellipse cx="1130" cy="481" rx="28" ry="21" transform="rotate(-26 1130 481)" fill="url(#deep)"/></g>
      <ellipse cx="890" cy="679" rx="21" ry="15" transform="rotate(-26 890 679)" fill="url(#holeL)"/>
      <ellipse cx="1317" cy="679" rx="21" ry="15" transform="rotate(-26 1317 679)" fill="url(#holeL)"/>
      <path d="M893 694q5-2 8-6M1320 694q5-2 8-6" stroke="#e6e6e6" stroke-width="2" fill="none"/>
      <path d="M1010 600h160v150h-160z" fill="url(#pinSide)" clip-path="url(#pinClip)"/>
      <g clip-path="url(#capClip)">
        <path d="M1010 590h130v120h-130z" fill="url(#pinRound)"/>
        <path d="M1010 590h130v120h-130z" fill="url(#pinShade)"/>
        <path d="M1030 674Q1056 694 1088 676T1118 640" fill="none" stroke="url(#glint)" stroke-width="8" stroke-linecap="round" filter="url(#soft)"/>
      </g>
      <ellipse cx="1071" cy="644" rx="43" ry="31" transform="rotate(-26 1071 644)" fill="#bfbfc4"/>
      <g fill="none" stroke="#10c010" stroke-width="1">
        <ellipse cx="1071" cy="644" rx="43" ry="31" transform="rotate(-26 1071 644)"/>
        <ellipse cx="1075" cy="654" rx="58" ry="42" transform="rotate(-26 1075 654)"/>
        <ellipse cx="1098" cy="698" rx="58" ry="42" transform="rotate(-26 1098 698)"/>
        <path d="M1023 679L1046 723M1127 629L1149 673" stroke-width="1.500"/>
      </g>
      <g fill="none" stroke="#7b4549" stroke-width="1">
        <path d="M791 547H1407L1480 695H864z"/>
        <path d="M1150 383L1222 530 1121 859 1049 712z"/>
      </g>
      <g stroke="#75443e" stroke-width="1" stroke-dasharray="18 5 5 5"><path d="M958 610l45 90M1302 610l45 92M1122 463l33 70"/></g>
      <path d="M1778 586v15l4-3 3 7 3-1-3-7h5z" fill="#fff" stroke="#222" stroke-width="1"/>
    </svg>
    <div class="viewtools">
      <button aria-label="Refit"><svg class="i20"><use href="#refit"/></svg></button>
      <button aria-label="Zoom in"><svg class="i20"><use href="#zoomin"/></svg></button>
      <button aria-label="Zoom out"><svg class="i20"><use href="#zoomout"/></svg></button>
      <button aria-label="Repaint"><svg class="i20"><use href="#repaint"/></svg></button>
      <button class="corner" aria-label="Rendering"><svg class="i20"><use href="#spheres"/></svg></button>
      <button class="corner" aria-label="Display style"><svg class="i20"><use href="#display"/></svg></button>
      <button class="corner" aria-label="Saved orientations"><svg class="i20"><use href="#saved"/></svg></button>
      <button aria-label="View manager"><svg class="i20"><use href="#viewmgr"/></svg></button>
      <button aria-label="Perspective"><svg class="i20"><use href="#persp"/></svg></button>
      <button class="corner" aria-label="Section"><svg class="i20"><use href="#section"/></svg></button>
      <button class="corner" aria-label="Datum display"><svg class="i20"><use href="#datums"/></svg></button>
      <button class="on" aria-label="Annotation display"><svg class="i20"><use href="#annot"/></svg></button>
      <button aria-label="Spin center"><svg class="i20"><use href="#spin"/></svg></button>
      <button aria-label="Simulate" disabled><svg class="i20"><use href="#simulate"/></svg></button>
      <button aria-label="Pause" disabled><svg class="i20"><use href="#pause"/></svg></button>
      <button aria-label="Result" disabled><svg class="i20"><use href="#result"/></svg></button>
    </div>
  </section>
</main>

<footer>
  <button class="on" aria-label="Show navigator"><svg class="i20"><use href="#panel"/></svg></button>
  <button aria-label="Browser"><svg class="i20"><use href="#globe"/></svg></button>
  <button aria-label="Full screen"><svg class="i20"><use href="#screen"/></svg></button>
  <p><i class="dot"></i>EDIT_REFERENCES regeneration completed successfully.</p>
  <div class="find"><button aria-label="Find"><svg class="i20"><use href="#binoc"/></svg></button><button class="drop" aria-label="Find options"><i class="caret"></i></button></div>
  <output>1 selected</output>
  <div class="pick"><select aria-label="Selection filter"><option>Geometry</option></select><i class="caret"></i></div>
</footer>
</body>
</html>
```
FILE: styles.css
```css
* { box-sizing: border-box; }
html, body { height: 100%; }
body {
  margin: 0;
  display: flex;
  flex-direction: column;
  overflow: hidden;
  font: 14px/20px "Open Sans", "Noto Sans", sans-serif;
  color: #484c4e;
  background: #f8fafb;
}
button { font: inherit; color: inherit; background: none; border: 0; padding: 0; display: flex; align-items: center; white-space: nowrap; }
svg { flex: none; display: block; overflow: visible; }
.sprite { position: absolute; width: 0; height: 0; }
.i16 { width: 16px; height: 16px; }
.i18 { width: 18px; height: 18px; }
.i20 { width: 20px; height: 20px; }
.i40 { width: 38px; height: 38px; }
.caret { flex: none; width: 9px; height: 5px; background: #616567; clip-path: polygon(0 0, 100% 0, 50% 100%); }
button:disabled { color: #a9adaf; }
button:disabled .caret { background: #a4a7a9; }

/* title bar */
.titlebar { display: grid; grid-template-columns: 1fr auto 1fr; grid-template-rows: 34px; align-items: center; background: #d8dfe0; flex: none; }
.titlebar > * { grid-row: 1; }
.brand { grid-column: 1; display: flex; align-items: center; gap: 6px; padding-left: 10px; }
.brand span { font: 23px/24px "Lato", sans-serif; color: #54585a; }
.brand sup { font-size: 8px; line-height: 8px; vertical-align: 8px; }
.quick { grid-column: 1; display: flex; align-items: center; gap: 10px; padding-left: 107px; }
.quick button { gap: 8px; color: #4b5052; }
.quick button:disabled { color: #a9afb1; }
.flip { transform: scaleX(-1); }
.quick .customize { flex-direction: column; gap: 2px; border-left: 1px solid #a7adaf; height: 30px; padding: 0 9px; justify-content: center; }
.customize .bar { width: 11px; height: 2px; background: #4b5052; }
.titlebar h1 { grid-column: 2; margin: 0; font: 400 16px/22px "Noto Sans", sans-serif; }
.winctl { grid-column: 3; justify-self: end; display: flex; gap: 17px; padding-right: 12px; }

/* ribbon tabs */
.tabs { display: flex; height: 35px; flex: none; background: #3f4748; font-family: "Noto Sans", sans-serif; }
.tabs > button { padding: 0 28px 0 29px; font-size: 16px; color: #f3f5f5; }
.tabs > .file { width: 75px; padding: 0; justify-content: center; color: #fff; background: linear-gradient(170deg, #66cf48, #4ba131); }
.tabs > .on { color: #4b8a36; background: #f8fafb; }
.help { margin-left: auto; display: flex; align-items: center; gap: 12px; padding: 0 8px 4px 0; color: #fff; }
.help button { gap: 11px; }
.help b { font-size: 17px; width: 14px; text-align: center; }
.help .caret { background: #fff; }

/* ribbon */
.ribbon { display: flex; flex: none; height: 136px; background: #f8fafb; border-bottom: 1px solid #b2b7b9; }
.group { display: flex; flex-direction: column; flex: none; border-right: 1px solid #b0b5b7; margin: 3px 0 2px; }
.cols { display: grid; height: 104px; }
.col { display: grid; grid-template-rows: repeat(3, 34px); align-content: start; margin-top: -2px; }
.col button { gap: 5px; }
.col .caret { margin-left: 4px; }
.big { flex-direction: column; align-items: center; padding-top: 4px; line-height: 20px; }
.big svg { margin-bottom: 14px; }
.big .caret { margin-top: 6px; }
.name { height: 26px; justify-content: center; gap: 5px; }
.ops { width: 140px; }
.ops .cols { grid-template-columns: 92px auto; }
.ops .col { padding-left: 2px; }
.getdata { width: 183px; }
.body { width: 174px; }
.getdata .cols, .body .cols, .eng .cols { padding-left: 8px; }
.datum { width: 270px; }
.datum .cols { grid-template-columns: 56px 152px auto; }
.datum .col { padding-left: 2px; }
.shapes { width: 185px; }
.shapes .cols { grid-template-columns: 66px auto; }
.shapes .col { padding-left: 2px; }
.eng { width: 201px; }
.eng .cols { grid-template-columns: 108px auto; }
.editing { width: 445px; }
.editing .cols { grid-template-columns: 62px 80px 91px 85px auto; }
.editing .big + .col { padding-left: 2px; }
.surfaces { width: 173px; }
.surfaces .cols { grid-template-columns: 79px auto; }
.surfaces .col { padding-left: 2px; }
.intent { width: 111px; }

/* work area */
main { flex: 1; min-height: 0; display: grid; grid-template-columns: 351px 1fr; }
aside { border-right: 3px solid #d9dfe1; background: #f8fafb; }
.paneltabs { display: flex; height: 32px; background: #d9dfe0; margin-right: -3px; }
.paneltabs button { width: 39px; justify-content: center; padding-right: 2px; }
.paneltabs .on { background: #f8fafb; padding: 0 0 0 4px; }
.treetools { display: flex; align-items: center; height: 40px; padding-left: 13px; }
.grip { width: 3px; height: 18px; margin: 0 24px 0 -4px; background: radial-gradient(circle, #b7bbbd 1px, transparent 2px) 0 0 / 3px 6px; }
.treetools button { margin-right: 10px; }
.sep { width: 1px; height: 30px; margin-right: 10px; background: #a4a9ab; }
.treetools .more { margin: 0 11px 0 15px; }
.more svg { width: 12px; height: 10px; }
.treetools .corner { margin: 0; }
.corner { position: relative; }
.corner::after { content: ""; position: absolute; right: -1px; bottom: -1px; width: 4px; height: 4px; background: #6b6f71; clip-path: polygon(100% 0, 100% 100%, 0 100%); }
.filter { display: flex; align-items: center; height: 34px; padding-left: 14px; }
.searchbox { display: flex; align-items: center; width: 252px; height: 34px; margin-left: 4px; padding: 0 6px; border: 1px solid #9ba3a6; background: #fff; }
.searchbox input { flex: 1; min-width: 0; height: 26px; border: 0; outline: 0; font: inherit; }
.searchbox svg { width: 11px; height: 11px; }
.filter > .caret { margin: 0 14px 0 7px; }
.plus { width: 14px; height: 14px; }
.treehead { height: 27px; margin: 6px 6px 0 10px; border: solid #c8cdcf; border-width: 0 1px 1px 0; }
.tree { list-style: none; margin: 0; padding: 1px 0 0 38px; font: 12px/20px "Noto Sans", sans-serif; }
.tree li { display: flex; align-items: center; height: 22px; gap: 5px; }
.tree .root { margin-left: -24px; gap: 6px; }
.tree span { padding: 0 1px; }
.tree .pl svg { color: #8b744a; }
.tree .hid, .tree .hid svg { color: #b5b3a8; }
.tree .sel span { background: #b0e1fb; color: #23303a; }
.exp { width: 9px; height: 12px; margin-left: -18px; margin-right: 4px; background: #858a8c; clip-path: polygon(0 0, 100% 50%, 0 100%); }
.insert { height: 8px; margin: 4px 6px 0 13px; border: solid #67c64d; border-width: 0 2px; background: linear-gradient(#67c64d, #67c64d) center / 100% 2px no-repeat; }

.viewport { display: grid; min-width: 0; min-height: 0; background: #e8e9ed; }
.viewport > * { grid-area: 1 / 1; }
.scene { width: 100%; height: 100%; min-height: 0; }
.viewtools { display: flex; justify-self: center; align-self: start; margin-top: 7px; height: 38px; padding: 3px 3px 3px 1px; border: 1px solid #9ba1a6; background: #f8fafb; }
.viewtools button { width: 32px; justify-content: center; }
.viewtools .corner::after { right: 3px; bottom: 2px; }
.viewtools .on { width: 28px; margin: 0 2px; background: #d9dcdf; border: 1px solid #a9aeb1; }

/* status bar */
footer { display: flex; align-items: center; flex: none; height: 40px; padding: 0 21px 0 7px; background: #f8fafa; border-top: 1px solid #aeb3b8; }
footer > button { width: 26px; height: 30px; margin-right: 4px; justify-content: center; }
footer > .on { background: #dde0e0; border: 1px solid #a9adad; }
footer > button:nth-of-type(3) { margin-right: 10px; }
footer p { display: flex; align-items: center; height: 30px; margin: 0 auto 0 0; padding-left: 7px; border-left: 1px solid #a9adad; font: 12px/20px "Noto Sans", sans-serif; }
.dot { width: 7px; height: 7px; margin: -6px 5px 0 0; border-radius: 4px; background: #1e5f84; }
.find { display: flex; height: 32px; padding: 1px 2px; border-left: 1px solid #a9adad; border-right: 1px solid #a9adad; box-shadow: -5px 0 #f8fafa, -6px 0 #a9adad; }
.find button { width: 34px; justify-content: center; border: 1px solid #babfbf; }
.find .drop { width: 18px; margin-left: -1px; }
output { width: 114px; margin-left: 5px; }
.pick { position: relative; width: 217px; }
.pick select { width: 100%; height: 28px; padding: 0 8px; border: 1px solid #9fa5a6; border-radius: 0; appearance: none; background: linear-gradient(90deg, transparent calc(100% - 19px), #9fa5a6 0, #9fa5a6 calc(100% - 18px), transparent 0) #f8fafa; font: inherit; color: inherit; }
.pick .caret { position: absolute; right: 5px; top: 12px; }
```
